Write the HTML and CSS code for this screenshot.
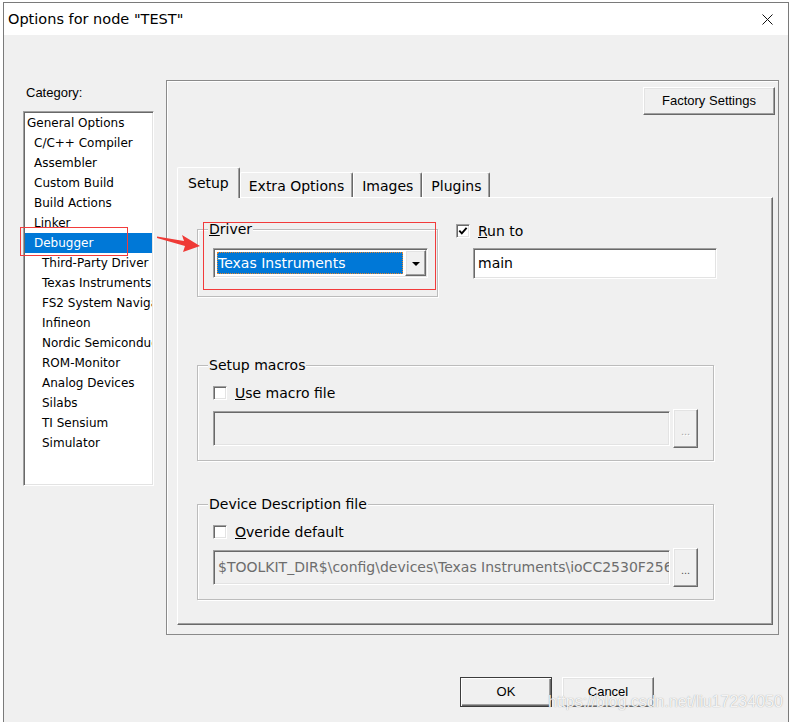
FILE: index.html
```html
<!DOCTYPE html>
<html>
<head>
<meta charset="utf-8">
<title>Options for node "TEST"</title>
<link rel="stylesheet" href="styles.css">
</head>
<body>
<div class="window">
  <div class="titlebar">
    <span class="title">Options for node "TEST"</span>
    <svg class="close" width="11" height="11" viewBox="0 0 11 11"><path d="M0.5 0.5 L10.5 10.5 M10.5 0.5 L0.5 10.5" stroke="#111" stroke-width="1" fill="none"/></svg>
  </div>
  <div class="client">
    <div class="main">
      <div class="category">
        <div class="cat-label">Category:</div>
        <ul class="cat-list sunken">
          <li>General Options</li>
          <li class="l1">C/C++ Compiler</li>
          <li class="l1">Assembler</li>
          <li class="l1">Custom Build</li>
          <li class="l1">Build Actions</li>
          <li class="l1">Linker</li>
          <li class="l1 selected">Debugger</li>
          <li class="l2">Third-Party Driver</li>
          <li class="l2">Texas Instruments</li>
          <li class="l2">FS2 System Navigator</li>
          <li class="l2">Infineon</li>
          <li class="l2">Nordic Semiconductor</li>
          <li class="l2">ROM-Monitor</li>
          <li class="l2">Analog Devices</li>
          <li class="l2">Silabs</li>
          <li class="l2">TI Sensium</li>
          <li class="l2">Simulator</li>
        </ul>
      </div>
      <div class="panel">
        <div class="btn raised factory">Factory Settings</div>
        <div class="tabs">
          <div class="tabstrip">
            <div class="tab active">Setup</div>
            <div class="tab">Extra Options</div>
            <div class="tab">Images</div>
            <div class="tab">Plugins</div>
          </div>
          <div class="tabpage">
            <div class="row1">
              <div class="group driver">
                <div class="group-title"><u>D</u>river</div>
                <div class="combo sunken">
                  <div class="combo-value"><div class="combo-sel">Texas Instruments</div></div>
                  <div class="combo-btn raised"><span class="tri"></span></div>
                </div>
              </div>
              <div class="runto">
                <div class="check-row">
                  <span class="checkbox sunken"><svg width="12" height="12" viewBox="0 0 12 12"><path d="M2.3 5.6 L4.8 8.3 L9.6 2.8" stroke="#000" stroke-width="1.9" fill="none"/></svg></span>
                  <span><u>R</u>un to</span>
                </div>
                <div class="textfield sunken">main</div>
              </div>
            </div>
            <div class="group wide macros">
              <div class="group-title">Setup macros</div>
              <div class="check-row">
                <span class="checkbox sunken"></span>
                <span><u>U</u>se macro file</span>
              </div>
              <div class="file-row">
                <div class="file-field sunken"></div>
                <div class="browse raised disabled">...</div>
              </div>
            </div>
            <div class="group wide device">
              <div class="group-title">Device Description file</div>
              <div class="check-row">
                <span class="checkbox sunken"></span>
                <span><u>O</u>veride default</span>
              </div>
              <div class="file-row">
                <div class="file-field sunken">$TOOLKIT_DIR$\config\devices\Texas Instruments\ioCC2530F256.ddf</div>
                <div class="browse raised">...</div>
              </div>
            </div>
          </div>
        </div>
      </div>
    </div>
    <div class="footer">
      <div class="btn raised default">OK</div>
      <div class="btn raised">Cancel</div>
    </div>
  </div>
</div>
<div class="annot-box box-debugger"></div>
<div class="annot-box box-driver"></div>
<svg class="annot-arrow" width="46" height="22" viewBox="0 0 46 22"><polygon points="1,4.5 28,9 26,3 44,14 27,20 29,14 1,6" fill="#ef3a36"/></svg>
<div class="watermark">https://blog.csdn.net/liu17234050</div>
</body>
</html>
```

FILE: styles.css
```css
html, body {
  margin: 0;
  padding: 0;
}
body {
  background: #fff;
  overflow: hidden;
  font-family: "DejaVu Sans", sans-serif;
  color: #000;
}
.window {
  margin: 2px 0 0 3px;
  width: 786px;
  height: 720px;
  box-sizing: border-box;
  border: 1px solid #7a7a7a;
  border-bottom: none;
  background: #f0f0f0;
  display: flex;
  flex-direction: column;
}
.titlebar {
  height: 32px;
  flex: none;
  background: #fff;
  display: flex;
  align-items: center;
  justify-content: space-between;
  padding: 0 15px 0 4px;
  box-sizing: border-box;
}
.title {
  font-family: "DejaVu Sans", sans-serif;
  font-size: 14.5px;
  line-height: 18px;
}
.close { display: block; }

.sunken {
  border: 1px solid;
  border-color: #a0a0a0 #fff #fff #a0a0a0;
  box-shadow: inset 1px 1px 0 #696969, inset -1px -1px 0 #e3e3e3;
  box-sizing: border-box;
}
.raised {
  border: 1px solid;
  border-color: #fff #696969 #696969 #fff;
  box-shadow: inset -1px -1px 0 #a0a0a0, inset 1px 1px 0 #e3e3e3;
  background: #f0f0f0;
  box-sizing: border-box;
}

.client {
  padding: 45px 0 0 19px;
}
.main {
  display: flex;
  align-items: flex-start;
}
.category {
  width: 131px;
  flex: none;
}
.cat-label {
  font: 13px/16px "Liberation Sans", sans-serif;
  margin-top: 5px;
  padding-left: 3px;
}
.cat-list {
  list-style: none;
  margin: 10px 0 0;
  padding: 1px;
  height: 375px;
  background: #fff;
  overflow: hidden;
}
.cat-list li {
  height: 20px;
  line-height: 20px;
  font-size: 12px;
  white-space: nowrap;
  overflow: hidden;
  padding-left: 2px;
}
.cat-list li.l1 { padding-left: 9px; }
.cat-list li.l2 { padding-left: 17px; }
.cat-list li.selected {
  background: #0078d7;
  color: #fff;
}

.panel {
  margin-left: 12px;
  width: 613px;
  height: 555px;
  box-sizing: border-box;
  border: 1px solid #8a8a8a;
  box-shadow: inset 1px 1px 0 #fff;
  display: flex;
  flex-direction: column;
}
.btn {
  display: flex;
  align-items: center;
  justify-content: center;
  font: 13px/16px "Liberation Sans", sans-serif;
  color: #000;
}
.factory {
  align-self: flex-end;
  margin: 6px 3px 0 0;
  width: 132px;
  height: 28px;
}
.tabs {
  flex: 1;
  margin: 52px 5px 9px 10px;
  display: flex;
  flex-direction: column;
}
.tabstrip {
  display: flex;
  align-items: flex-end;
  height: 30px;
  flex: none;
}
.tab {
  height: 25px;
  box-sizing: border-box;
  padding: 5px 8px 0;
  border-top: 1px solid #fff;
  border-left: 1px solid #fff;
  border-right: 1px solid #696969;
  box-shadow: inset -1px 0 0 #a0a0a0;
  border-radius: 2px 2px 0 0;
  font: 14px/16px "DejaVu Sans", sans-serif;
  white-space: nowrap;
}
.tab.active {
  height: 31px;
  padding: 7px 10px 0;
  margin-bottom: -1px;
  position: relative;
  z-index: 1;
  background: #f0f0f0;
}
.tabpage {
  flex: 1;
  border-top: 1px solid #fff;
  border-left: 1px solid #fff;
  border-right: 1px solid #696969;
  border-bottom: 1px solid #696969;
  box-shadow: inset -1px -1px 0 #a0a0a0;
  padding: 24px 0 0 19px;
  font: 14px/16px "DejaVu Sans", sans-serif;
}
.row1 {
  display: flex;
  align-items: flex-start;
}
.group {
  position: relative;
  border: 1px solid #bcbcbc;
  box-shadow: inset 1px 1px 0 #fff, 1px 1px 0 #fff;
}
.group-title {
  position: absolute;
  left: 10px;
  top: -9px;
  padding: 0 1px;
  background: #f0f0f0;
  white-space: nowrap;
}
.driver {
  margin-top: 7px;
  padding: 18px 9px 18px 15px;
}
.combo {
  display: flex;
  width: 215px;
  height: 30px;
  padding: 1px;
  background: #fff;
}
.combo-value {
  flex: 1;
  padding: 2px;
  display: flex;
}
.combo-sel {
  flex: 1;
  background: #0078d7;
  color: #fff;
  outline: 1px dotted #e8862a;
  outline-offset: -1px;
  padding-left: 1px;
  line-height: 22px;
  white-space: nowrap;
}
.combo-btn {
  width: 21px;
  display: flex;
  align-items: center;
  justify-content: center;
}
.tri {
  width: 0;
  height: 0;
  border-left: 4px solid transparent;
  border-right: 4px solid transparent;
  border-top: 4px solid #000;
  margin-top: 1px;
}
.runto {
  margin-left: 18px;
}
.check-row {
  display: flex;
  align-items: center;
  height: 17px;
  gap: 8px;
  white-space: nowrap;
}
.checkbox {
  width: 14px;
  height: 14px;
  background: #fff;
  display: flex;
  align-items: center;
  justify-content: center;
  flex: none;
}
.checkbox svg { display: block; }
.textfield {
  margin: 9px 0 0 17px;
  width: 244px;
  height: 31px;
  background: #fff;
  padding-left: 4px;
  line-height: 29px;
}
.wide {
  width: 517px;
  box-sizing: border-box;
  padding: 18px 15px 12px 15px;
}
.macros { margin-top: 68px; }
.device { margin-top: 43px; }
.file-row {
  display: flex;
  align-items: center;
  height: 39px;
  margin-top: 8px;
}
.file-field {
  width: 457px;
  height: 35px;
  background: #f0f0f0;
  color: #6d6d6d;
  padding-left: 4px;
  line-height: 33px;
  white-space: nowrap;
  overflow: hidden;
}
.browse {
  width: 25px;
  height: 39px;
  margin-left: 3px;
  display: flex;
  align-items: center;
  justify-content: center;
  font: 11px/12px "Liberation Sans", sans-serif;
  color: #555;
  padding-top: 4px;
}
.browse.disabled {
  color: #a8a8a8;
  text-shadow: 1px 1px 0 #fff;
}

.footer {
  display: flex;
  justify-content: flex-end;
  gap: 10px;
  margin-top: 42px;
  padding-right: 134px;
}
.footer .btn {
  width: 92px;
  height: 30px;
}
.btn.default {
  border-color: #3c3c3c;
  box-shadow: inset 1px 1px 0 #fff, inset -1px -1px 0 #696969, inset -2px -2px 0 #a0a0a0;
}

.annot-box {
  position: absolute;
  border: 1px solid #f23b3b;
  box-sizing: border-box;
}
.box-debugger {
  left: 20px;
  top: 227px;
  width: 108px;
  height: 29px;
}
.box-driver {
  left: 203px;
  top: 222px;
  width: 233px;
  height: 68px;
}
.annot-arrow {
  position: absolute;
  left: 156px;
  top: 232px;
}
.watermark {
  position: absolute;
  left: 548px;
  top: 693px;
  font: 16px/18px "Liberation Sans", sans-serif;
  color: rgba(255, 255, 255, 0.9);
  text-shadow: 0 0 1px rgba(110, 110, 110, 0.7);
  white-space: nowrap;
}
```
